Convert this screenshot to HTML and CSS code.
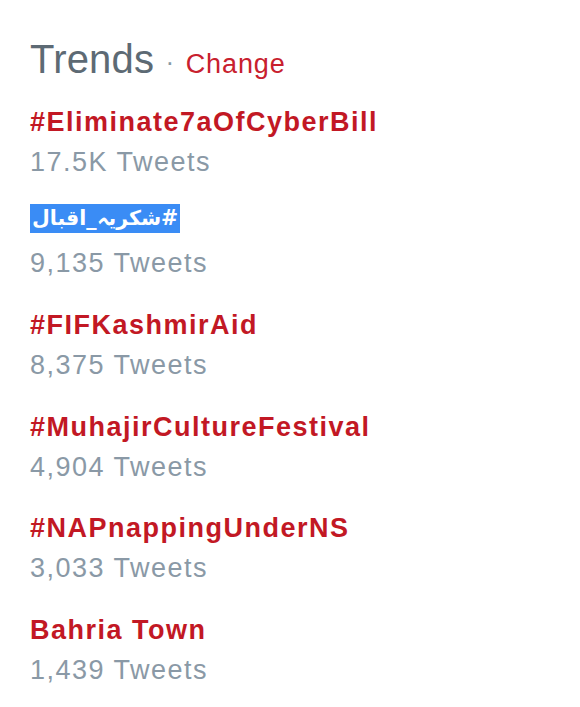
FILE: index.html
```html
<!DOCTYPE html>
<html lang="en">
<head>
<meta charset="utf-8">
<title>Trends</title>
<link rel="stylesheet" href="styles.css">
</head>
<body>
<div class="trends">
  <h3 class="trends-title">Trends <span class="dot">·</span> <a class="change" href="#">Change</a></h3>
  <ul class="trend-list">
    <li class="trend">
      <a class="trend-name" href="#">#Eliminate7aOfCyberBill</a>
      <div class="trend-count">17.5K Tweets</div>
    </li>
    <li class="trend">
      <a class="trend-name" href="#"><span class="selected" dir="rtl">#شکریہ_اقبال</span></a>
      <div class="trend-count">9,135 Tweets</div>
    </li>
    <li class="trend">
      <a class="trend-name" href="#">#FIFKashmirAid</a>
      <div class="trend-count">8,375 Tweets</div>
    </li>
    <li class="trend">
      <a class="trend-name" href="#">#MuhajirCultureFestival</a>
      <div class="trend-count">4,904 Tweets</div>
    </li>
    <li class="trend">
      <a class="trend-name" href="#">#NAPnappingUnderNS</a>
      <div class="trend-count">3,033 Tweets</div>
    </li>
    <li class="trend">
      <a class="trend-name" href="#">Bahria Town</a>
      <div class="trend-count">1,439 Tweets</div>
    </li>
  </ul>
</div>
</body>
</html>
```
FILE: styles.css
```css
html, body {
  margin: 0;
  padding: 0;
  background: #ffffff;
}
body {
  font-family: "Liberation Sans", Arial, "DejaVu Sans", sans-serif;
}
.trends {
  padding: 35px 0 0 30px;
}
.trends-title {
  margin: 0;
  font-size: 40px;
  line-height: 48px;
  font-weight: normal;
  color: #5d6a74;
  letter-spacing: 0.2px;
}
.dot {
  font-size: 26px;
  color: #8899a6;
  margin: 0 0 0 0;
  position: relative;
  top: -2px;
}
.change {
  font-size: 27px;
  color: #c8202e;
  text-decoration: none;
  letter-spacing: 0.9px;
}
.trend-list {
  list-style: none;
  margin: 13.5px 0 0 0;
  padding: 0;
}
.trend {
  padding-bottom: 21.7px;
}
.trend-name {
  display: block;
  font-size: 27px;
  line-height: 40px;
  height: 40px;
  font-weight: bold;
  color: #c21824;
  text-decoration: none;
  letter-spacing: 1.5px;
}
.trend-count {
  font-size: 27px;
  line-height: 40px;
  color: #8a99a6;
  letter-spacing: 1.5px;
}
.selected {
  display: inline-block;
  vertical-align: top;
  height: 29px;
  line-height: 29px;
  margin-top: 1px;
  padding: 0 2px;
  background: #3a8cf5;
  color: #ffffff;
  font-family: "DejaVu Sans", sans-serif;
  font-size: 20.5px;
  letter-spacing: 0;
}
```
